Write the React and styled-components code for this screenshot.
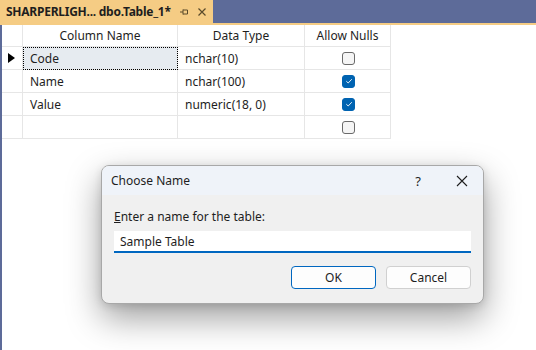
import React from 'react'
import styled, { createGlobalStyle } from 'styled-components'

const GlobalStyle = createGlobalStyle`
    html, body {
        margin: 0;
        padding: 0;
        background: #ffffff;
    }
    body {
        font-family: "Noto Sans", "Open Sans", "Liberation Sans", sans-serif;
        font-size: 12px;
        color: #1e1e1e;
    }
`

const rows = [
    { name: 'Code', type: 'nchar(10)', nulls: false, current: true },
    { name: 'Name', type: 'nchar(100)', nulls: true },
    { name: 'Value', type: 'numeric(18, 0)', nulls: true },
    { name: '', type: '', nulls: false },
]

function CheckBox({ checked }) {
    return (
        <Box checked={checked}>
            {checked && (
                <svg width="8" height="8" viewBox="0 0 8 8">
                    <path d="M1.3 4.2 L3.2 6 L6.8 2.2" fill="none" stroke="#ffffff" strokeWidth="0.9" />
                </svg>
            )}
        </Box>
    )
}

function App() {
    return (
        <Window>
            <GlobalStyle />
            <TabStrip>
                <Tab>
                    <TabTitle>SHARPERLIGH... dbo.Table_1*</TabTitle>
                    <svg width="10" height="10" viewBox="0 0 10 10">
                        <path d="M1 5 H4 M4 2.5 V7.5 M4 3 H8.5 V7 H4" fill="none" stroke="#5a4a2a" strokeWidth="1" />
                    </svg>
                    <svg width="10" height="10" viewBox="0 0 10 10">
                        <path d="M1.5 1.5 L8.5 8.5 M8.5 1.5 L1.5 8.5" stroke="#5a4a2a" strokeWidth="1.2" />
                    </svg>
                </Tab>
            </TabStrip>
            <Document>
                <Grid>
                    <Row>
                        <RowHead />
                        <HeadCell>Column Name</HeadCell>
                        <HeadCell>Data Type</HeadCell>
                        <HeadCell>Allow Nulls</HeadCell>
                    </Row>
                    {rows.map((r, i) => (
                        <Row key={i} tall>
                            <RowHead>{r.current && <Arrow />}</RowHead>
                            <Cell selected={r.current}>{r.name}</Cell>
                            <Cell>{r.type}</Cell>
                            <Cell center>
                                <CheckBox checked={r.nulls} />
                            </Cell>
                        </Row>
                    ))}
                </Grid>

                <Dialog>
                    <TitleBar>
                        <DialogTitle>Choose Name</DialogTitle>
                        <TitleButton>?</TitleButton>
                        <TitleButton>
                            <svg width="12" height="12" viewBox="0 0 12 12">
                                <path d="M1 1 L11 11 M11 1 L1 11" stroke="#1e1e1e" strokeWidth="1.1" />
                            </svg>
                        </TitleButton>
                    </TitleBar>
                    <DialogBody>
                        <Label><u>E</u>nter a name for the table:</Label>
                        <Input>Sample Table</Input>
                        <Buttons>
                            <Button primary>OK</Button>
                            <Button>Cancel</Button>
                        </Buttons>
                    </DialogBody>
                </Dialog>
            </Document>
        </Window>
    )
}

export default App

const Window = styled.div`
    width: 536px;
    height: 350px;
    background: #5d6b99;
    display: flex;
    flex-direction: column;
    overflow: hidden;
`

const TabStrip = styled.div`
    height: 23px;
    display: flex;
    border-bottom: 2px solid #f5cc84;
`

const Tab = styled.div`
    width: 213px;
    background: #f5cc84;
    display: flex;
    align-items: center;
    gap: 8px;
    padding-left: 6px;
    box-sizing: border-box;
    svg {
        flex: none;
    }
`

const TabTitle = styled.span`
    font-weight: 700;
    font-size: 12px;
    color: #1e1e1e;
    white-space: nowrap;
    letter-spacing: -0.25px;
`

const Document = styled.div`
    flex: 1;
    margin-left: 2px;
    background: #ffffff;
    position: relative;
`

const Grid = styled.div`
    width: 389px;
`

const Row = styled.div`
    display: grid;
    grid-template-columns: 21px 155px 127px 86px;
    height: ${props => props.tall ? '23px' : '22px'};
`

const RowHead = styled.div`
    border-right: 1px solid #e6e6e6;
    border-bottom: 1px solid #e6e6e6;
    display: flex;
    align-items: center;
    padding-left: 6px;
`

const Arrow = styled.div`
    width: 0;
    height: 0;
    border-top: 5px solid transparent;
    border-bottom: 5px solid transparent;
    border-left: 7px solid #000000;
`

const HeadCell = styled.div`
    border-right: 1px solid #e6e6e6;
    border-bottom: 1px solid #e6e6e6;
    display: flex;
    align-items: center;
    justify-content: center;
`

const Cell = styled.div`
    border-right: 1px solid #e6e6e6;
    border-bottom: 1px solid #e6e6e6;
    display: flex;
    align-items: center;
    justify-content: ${props => props.center ? 'center' : 'flex-start'};
    padding-left: ${props => props.center ? '0' : '7px'};
    background: ${props => props.selected ? '#e6ebf0' : 'transparent'};
    outline: ${props => props.selected ? '1px dotted #000000' : 'none'};
    outline-offset: -1px;
    white-space: nowrap;
`

const Box = styled.div`
    width: 11px;
    height: 11px;
    border-radius: 3px;
    border: 1px solid ${props => props.checked ? '#0063b1' : '#6a6a6a'};
    background: ${props => props.checked ? '#0063b1' : '#f5f5f5'};
    display: flex;
    align-items: center;
    justify-content: center;
    margin-left: 2px;
`

const Dialog = styled.div`
    position: absolute;
    left: 99px;
    top: 140px;
    width: 383px;
    height: 139px;
    box-sizing: border-box;
    border: 1px solid #a8a8a8;
    border-radius: 8px;
    background: #f0f0f0;
    box-shadow: 0 14px 34px rgba(0, 0, 0, 0.38), 0 2px 8px rgba(0, 0, 0, 0.12);
    overflow: hidden;
    display: flex;
    flex-direction: column;
`

const TitleBar = styled.div`
    height: 29px;
    background: #eff3f9;
    display: flex;
    align-items: center;
    padding-left: 9px;
    padding-right: 10px;
    gap: 22px;
`

const DialogTitle = styled.div`
    flex: 1;
    font-size: 12px;
`

const TitleButton = styled.div`
    width: 22px;
    display: flex;
    justify-content: center;
    font-size: 13px;
`

const DialogBody = styled.div`
    padding: 14px 12px 0 12px;
    display: flex;
    flex-direction: column;
`

const Label = styled.div`
    font-size: 12px;
    line-height: 16px;
`

const Input = styled.div`
    margin-top: 6px;
    height: 22px;
    box-sizing: border-box;
    background: #ffffff;
    border-bottom: 2px solid #0067c0;
    padding-left: 6px;
    display: flex;
    align-items: center;
    font-size: 12px;
`

const Buttons = styled.div`
    display: flex;
    justify-content: flex-end;
    gap: 10px;
    margin-top: 13px;
`

const Button = styled.div`
    width: 85px;
    height: 23px;
    box-sizing: border-box;
    border-radius: 4px;
    background: #fdfdfd;
    border: 1px solid ${props => props.primary ? '#0067c0' : '#d0d0d0'};
    display: flex;
    align-items: center;
    justify-content: center;
    font-size: 12px;
`
